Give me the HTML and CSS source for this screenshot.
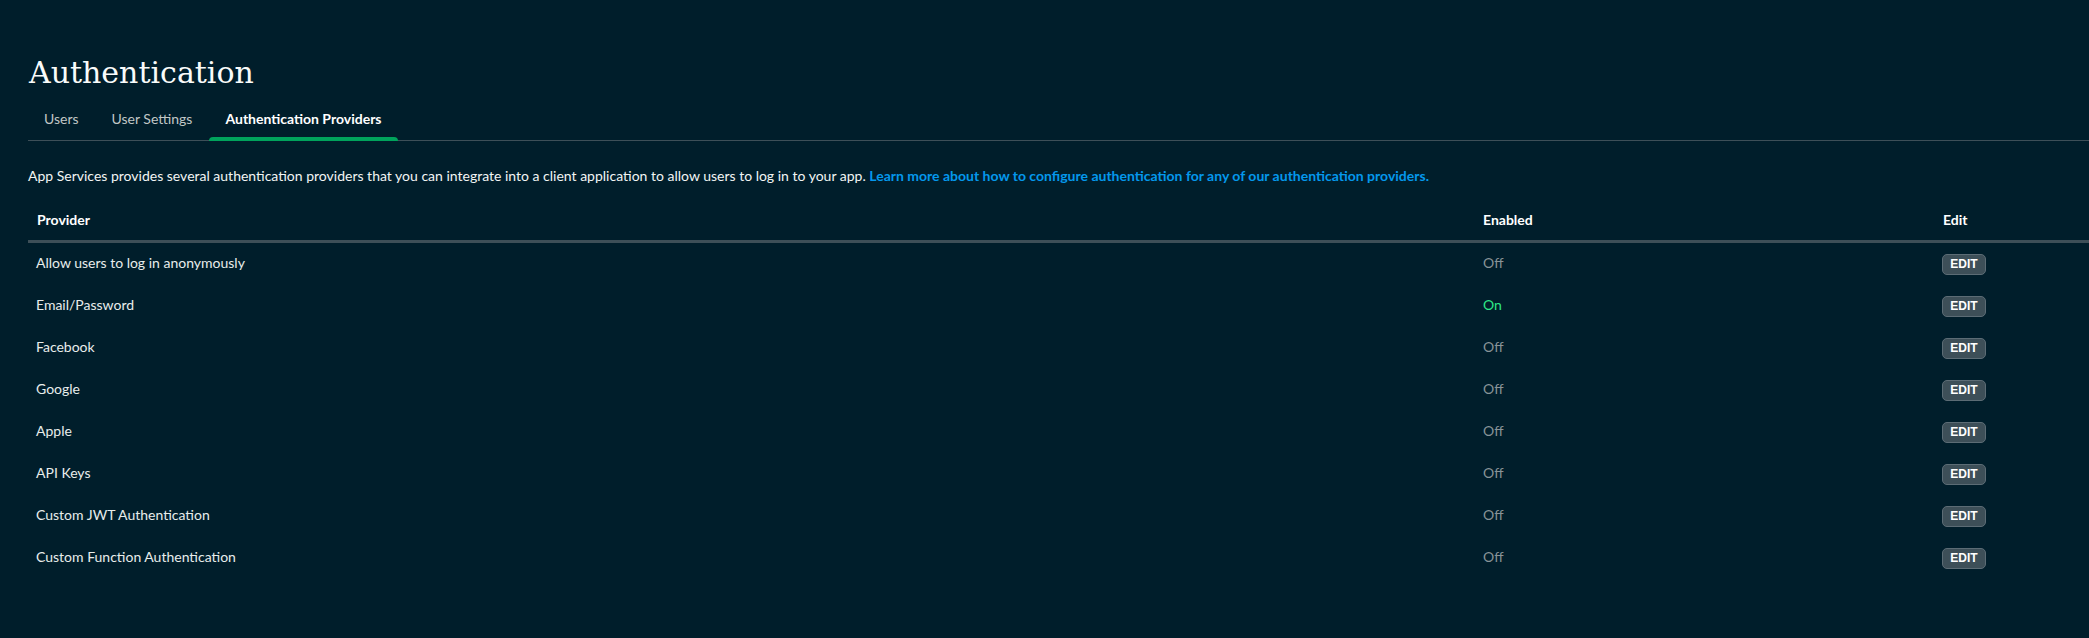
FILE: index.html
```html
<!DOCTYPE html>
<html lang="en">
<head>
<meta charset="utf-8">
<title>Authentication</title>
<link rel="stylesheet" href="styles.css">
</head>
<body>
<main class="page">
  <h1 class="title">Authentication</h1>
  <nav class="tabs">
    <a class="tab">Users</a>
    <a class="tab">User Settings</a>
    <a class="tab tab-active">Authentication Providers</a>
  </nav>
  <p class="intro">App Services provides several authentication providers that you can integrate into a client application to allow users to log in to your app. <a class="link">Learn more about how to configure authentication for any of our authentication providers.</a></p>
  <div class="table">
    <div class="row head">
      <div class="cell">Provider</div>
      <div class="cell">Enabled</div>
      <div class="cell">Edit</div>
    </div>
    <div class="row"><div class="cell name">Allow users to log in anonymously</div><div class="cell status off">Off</div><div class="cell"><button class="edit">EDIT</button></div></div>
    <div class="row"><div class="cell name">Email/Password</div><div class="cell status on">On</div><div class="cell"><button class="edit">EDIT</button></div></div>
    <div class="row"><div class="cell name">Facebook</div><div class="cell status off">Off</div><div class="cell"><button class="edit">EDIT</button></div></div>
    <div class="row"><div class="cell name">Google</div><div class="cell status off">Off</div><div class="cell"><button class="edit">EDIT</button></div></div>
    <div class="row"><div class="cell name">Apple</div><div class="cell status off">Off</div><div class="cell"><button class="edit">EDIT</button></div></div>
    <div class="row"><div class="cell name">API Keys</div><div class="cell status off">Off</div><div class="cell"><button class="edit">EDIT</button></div></div>
    <div class="row"><div class="cell name">Custom JWT Authentication</div><div class="cell status off">Off</div><div class="cell"><button class="edit">EDIT</button></div></div>
    <div class="row"><div class="cell name">Custom Function Authentication</div><div class="cell status off">Off</div><div class="cell"><button class="edit">EDIT</button></div></div>
  </div>
</main>
</body>
</html>
```

FILE: styles.css
```css
html, body {
  margin: 0;
  padding: 0;
  background: #001E2B;
}
body {
  font-family: Lato, "Noto Sans", sans-serif;
  font-size: 14px;
  color: #E8EDEB;
  overflow: hidden;
}
.page {
  padding: 55px 0 0 28px;
}
.title {
  margin: 0;
  font-family: "DejaVu Serif", "Liberation Serif", serif;
  font-weight: normal;
  font-size: 30px;
  line-height: 36px;
  color: #F9FBFA;
  padding-left: 1px;
}
.tabs {
  display: flex;
  gap: 1px;
  margin-top: 8px;
  border-bottom: 1px solid #3D4F58;
}
.tab {
  position: relative;
  padding: 12px 16px 13px;
  line-height: 16px;
  color: #C1C7C6;
}
.tab-active {
  color: #FFFFFF;
  font-weight: bold;
}
.tab-active::after {
  content: "";
  position: absolute;
  left: 0;
  right: 0;
  bottom: -1px;
  height: 4px;
  border-radius: 4px 4px 0 0;
  background: #00A35C;
}
.intro {
  margin: 25px 0 0;
  line-height: 20px;
  color: #F2F5F4;
}
.link {
  color: #0498EC;
  font-weight: bold;
}
.table {
  margin-top: 14px;
}
.row {
  display: grid;
  grid-template-columns: 1446px 460px 1fr;
  align-items: center;
  height: 42px;
}
.row.head {
  height: 40px;
  border-bottom: 3px solid #3D4F58;
  font-weight: bold;
  color: #FFFFFF;
}
.cell {
  padding: 0 0 2px 9px;
  line-height: 16px;
}
.row.head .cell {
  padding: 0 0 0 9px;
}
.name {
  padding-left: 8px;
}
.off {
  color: #889397;
}
.on {
  color: #2EE887;
}
.edit {
  display: block;
  width: 44px;
  height: 21px;
  padding: 0;
  margin: 2px 0 0 -1px;
  background: #3D4F58;
  border: 1px solid #5C6C75;
  border-radius: 5px;
  color: #FFFFFF;
  font-family: "Liberation Sans", Arial, sans-serif;
  font-weight: bold;
  font-size: 12px;
  line-height: 19px;
  text-align: center;
}
```
